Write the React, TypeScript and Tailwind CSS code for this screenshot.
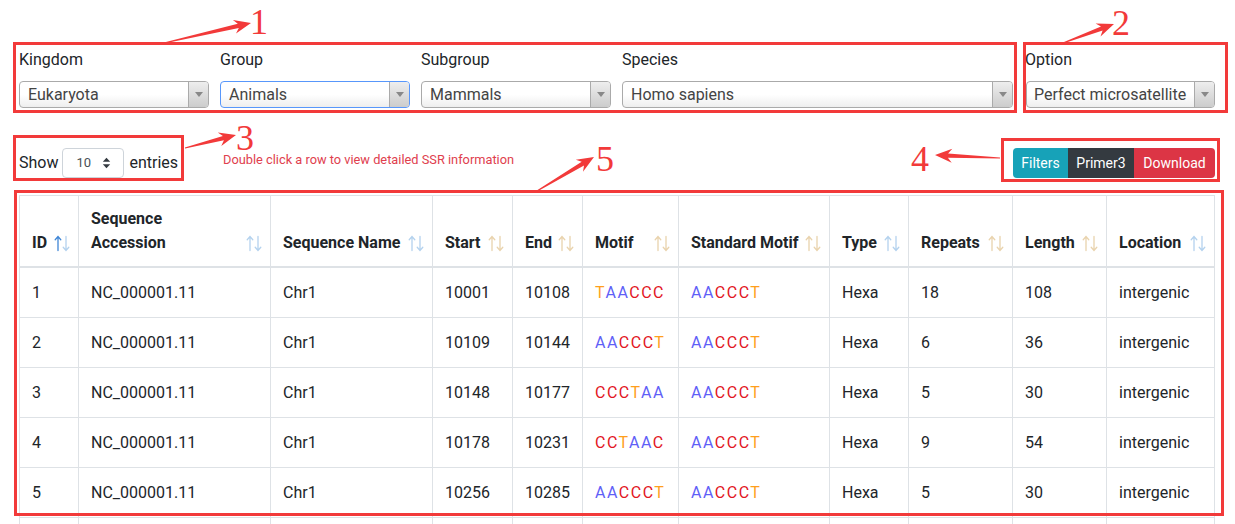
import React from 'react';

const RED = '#f23a3a';

type Col = { label: React.ReactNode; w: number; tone: 'blue' | 'tan'; active?: boolean };

const cols: Col[] = [
  { label: 'ID', w: 59, tone: 'blue', active: true },
  { label: <>Sequence<br />Accession</>, w: 192, tone: 'blue' },
  { label: 'Sequence Name', w: 162, tone: 'blue' },
  { label: 'Start', w: 80, tone: 'tan' },
  { label: 'End', w: 70, tone: 'tan' },
  { label: 'Motif', w: 96, tone: 'tan' },
  { label: 'Standard Motif', w: 151, tone: 'tan' },
  { label: 'Type', w: 79, tone: 'blue' },
  { label: 'Repeats', w: 104, tone: 'tan' },
  { label: 'Length', w: 94, tone: 'tan' },
  { label: 'Location', w: 108, tone: 'blue' },
];

const rows = [
  ['1', 'NC_000001.11', 'Chr1', '10001', '10108', 'TAACCC', 'AACCCT', 'Hexa', '18', '108', 'intergenic'],
  ['2', 'NC_000001.11', 'Chr1', '10109', '10144', 'AACCCT', 'AACCCT', 'Hexa', '6', '36', 'intergenic'],
  ['3', 'NC_000001.11', 'Chr1', '10148', '10177', 'CCCTAA', 'AACCCT', 'Hexa', '5', '30', 'intergenic'],
  ['4', 'NC_000001.11', 'Chr1', '10178', '10231', 'CCTAAC', 'AACCCT', 'Hexa', '9', '54', 'intergenic'],
  ['5', 'NC_000001.11', 'Chr1', '10256', '10285', 'AACCCT', 'AACCCT', 'Hexa', '5', '30', 'intergenic'],
];

const baseColor: Record<string, string> = { A: '#5f5ff7', C: '#e2161f', T: '#ff9f1c', G: '#2e9e3e' };

function Seq({ s }: { s: string }) {
  return (
    <span className="tracking-[1.5px]">
      {s.split('').map((ch, i) => (
        <span key={i} style={{ color: baseColor[ch] }}>{ch}</span>
      ))}
    </span>
  );
}

function SortIcon({ tone, active }: { tone: 'blue' | 'tan'; active?: boolean }) {
  const light = tone === 'blue' ? '#b4d2ee' : '#e9d3ad';
  const up = active ? '#3f86d6' : light;
  return (
    <svg width="16" height="17" viewBox="0 0 16 17" fill="none" strokeWidth="1.3" strokeLinecap="round">
      <path d="M4 15.5V1.8M1.2 4.8L4 1.6L6.8 4.8" stroke={up} />
      <path d="M12 1.5V15.2M9.2 12.2L12 15.4L14.8 12.2" stroke={light} />
    </svg>
  );
}

function Select2({ value, w, focus }: { value: string; w: string; focus?: boolean }) {
  return (
    <div
      className={`${w} h-[27px] flex rounded-[4px] border overflow-hidden bg-gradient-to-b from-white from-50% to-[#eeeeee] ${
        focus ? 'border-[#5897fb]' : 'border-[#aaaaaa]'
      }`}
    >
      <div className="flex-1 pl-2 text-[16px] leading-[26px] text-[#444] whitespace-nowrap overflow-hidden">{value}</div>
      <div className="w-[20px] border-l border-[#aaaaaa] bg-gradient-to-b from-[#eeeeee] to-[#cccccc] flex items-center justify-center">
        <div className="w-0 h-0 border-l-[4px] border-r-[4px] border-t-[5px] border-l-transparent border-r-transparent border-t-[#888]" />
      </div>
    </div>
  );
}

function Field({ label, value, w, focus }: { label: string; value: string; w: string; focus?: boolean }) {
  return (
    <div className="flex flex-col">
      <div className="text-[16px] leading-[24px] text-[#212529]">{label}</div>
      <div className="mt-[9px]">
        <Select2 value={value} w={w} focus={focus} />
      </div>
    </div>
  );
}

function arrowPoints(x1: number, y1: number, x2: number, y2: number) {
  const dx = x2 - x1;
  const dy = y2 - y1;
  const len = Math.hypot(dx, dy);
  const ux = dx / len;
  const uy = dy / len;
  const nx = -uy;
  const ny = ux;
  const H = 17;
  const W = 7;
  const bx = x2 - ux * H;
  const by = y2 - uy * H;
  const nbx = x2 - ux * (H - 4);
  const nby = y2 - uy * (H - 4);
  const pts = [
    [x1 + nx * 0.6, y1 + ny * 0.6],
    [nbx + nx * 2.2, nby + ny * 2.2],
    [bx + nx * W, by + ny * W],
    [x2, y2],
    [bx - nx * W, by - ny * W],
    [nbx - nx * 2.2, nby - ny * 2.2],
    [x1 - nx * 0.6, y1 - ny * 0.6],
  ];
  return pts.map((p) => p.map((v) => v.toFixed(1)).join(',')).join(' ');
}

const arrows: [number, number, number, number][] = [
  [164, 43, 251, 23],
  [1063, 43, 1114, 24],
  [185, 148, 236, 135],
  [1000, 158, 935, 155],
  [537, 191, 594, 157],
];

export default function App() {
  return (
    <div className="relative w-[1235px] h-[524px] overflow-hidden bg-white text-[#212529] font-['Roboto','Liberation_Sans',sans-serif]">
      {/* filters */}
      <div className="flex pt-[42px] pl-[13px]">
        <div className="w-[1004px] h-[71px] border-[3px] border-[#f23a3a] pl-[3px] pt-[3px] flex gap-[11px]">
          <Field label="Kingdom" value="Eukaryota" w="w-[190px]" />
          <Field label="Group" value="Animals" w="w-[190px]" focus />
          <Field label="Subgroup" value="Mammals" w="w-[190px]" />
          <Field label="Species" value="Homo sapiens" w="w-[391px]" />
        </div>
        <div className="ml-[6px] w-[205px] h-[71px] border-[3px] border-[#f23a3a] pt-[3px] -indent-[1px]">
          <Field label="Option" value="Perfect microsatellite" w="w-[189px]" />
        </div>
      </div>

      {/* length + toolbar */}
      <div className="flex items-start mt-[22px] pl-[13px]">
        <div className="w-[171px] h-[46px] border-[3px] border-[#f23a3a] pl-[3px] flex items-end">
          <div className="flex items-center h-[30px] text-[16px]">
            <span>Show</span>
            <div className="ml-[4px] w-[62px] h-[30px] border border-[#ced4da] rounded-[4px] flex items-center pl-[13px] pr-[12px] justify-between">
              <span className="text-[13px] text-[#495057]">10</span>
              <svg width="9" height="12" viewBox="0 0 9 12">
                <path d="M4.5 0.8L8.2 4.8H0.8Z" fill="#343a40" />
                <path d="M4.5 11.2L8.2 7.2H0.8Z" fill="#343a40" />
              </svg>
            </div>
            <span className="ml-[5px]">entries</span>
          </div>
        </div>
        <div className="ml-[39px] mt-[18px] text-[12.8px] leading-[14px] text-[#e0404e]">
          Double click a row to view detailed SSR information
        </div>
        <div className="ml-auto mr-[15px] mt-[3px] w-[219px] h-[44px] border-[3px] border-[#f23a3a] pl-[9px] pt-[7px]">
          <div className="flex h-[30px] text-[14px] text-white leading-[30px] text-center">
            <div className="w-[55px] bg-[#17a2b8] rounded-l-[4px]">Filters</div>
            <div className="w-[66px] bg-[#343a40]">Primer3</div>
            <div className="w-[81px] bg-[#dc3545] rounded-r-[4px]">Download</div>
          </div>
        </div>
      </div>

      {/* table */}
      <div className="mt-[13px] pl-[19px]">
        <table className="table-fixed border-collapse w-[1196px] text-[16px] leading-[24px]">
          <colgroup>
            {cols.map((c, i) => (
              <col key={i} style={{ width: c.w }} />
            ))}
          </colgroup>
          <thead>
            <tr>
              {cols.map((c, i) => (
                <th
                  key={i}
                  className="relative align-bottom text-left font-bold whitespace-nowrap border border-[#dee2e6] border-b-2 pl-3 pr-[26px] pt-[11px] pb-[11px]"
                >
                  {c.label}
                  <span className="absolute right-[8px] bottom-[14px] flex">
                    <SortIcon tone={c.tone} active={c.active} />
                  </span>
                </th>
              ))}
            </tr>
          </thead>
          <tbody>
            {rows.map((r, ri) => (
              <tr key={ri}>
                {r.map((v, ci) => (
                  <td key={ci} className="border border-[#dee2e6] px-3 pt-[13px] pb-3 whitespace-nowrap">
                    {ci === 5 || ci === 6 ? <Seq s={v} /> : v}
                  </td>
                ))}
              </tr>
            ))}
            <tr>
              {cols.map((_, ci) => (
                <td key={ci} className="border border-[#dee2e6] h-[49px]" />
              ))}
            </tr>
          </tbody>
        </table>
      </div>

      {/* annotations */}
      <div className="absolute left-[14px] top-[190px] w-[1210px] h-[326px] border-[3px] border-[#f23a3a] pointer-events-none" />
      <svg className="absolute inset-0 pointer-events-none" width="1235" height="524">
        {arrows.map((a, i) => (
          <polygon key={i} points={arrowPoints(...a)} fill={RED} />
        ))}
      </svg>
      <div className="absolute inset-0 pointer-events-none font-['Liberation_Serif',serif] text-[36px] leading-[26px] text-[#f23a3a]">
        <span className="absolute left-[250px] top-[9px]">1</span>
        <span className="absolute left-[1112px] top-[10px]">2</span>
        <span className="absolute left-[236px] top-[125px]">3</span>
        <span className="absolute left-[911px] top-[146px]">4</span>
        <span className="absolute left-[596px] top-[146px]">5</span>
      </div>
    </div>
  );
}
